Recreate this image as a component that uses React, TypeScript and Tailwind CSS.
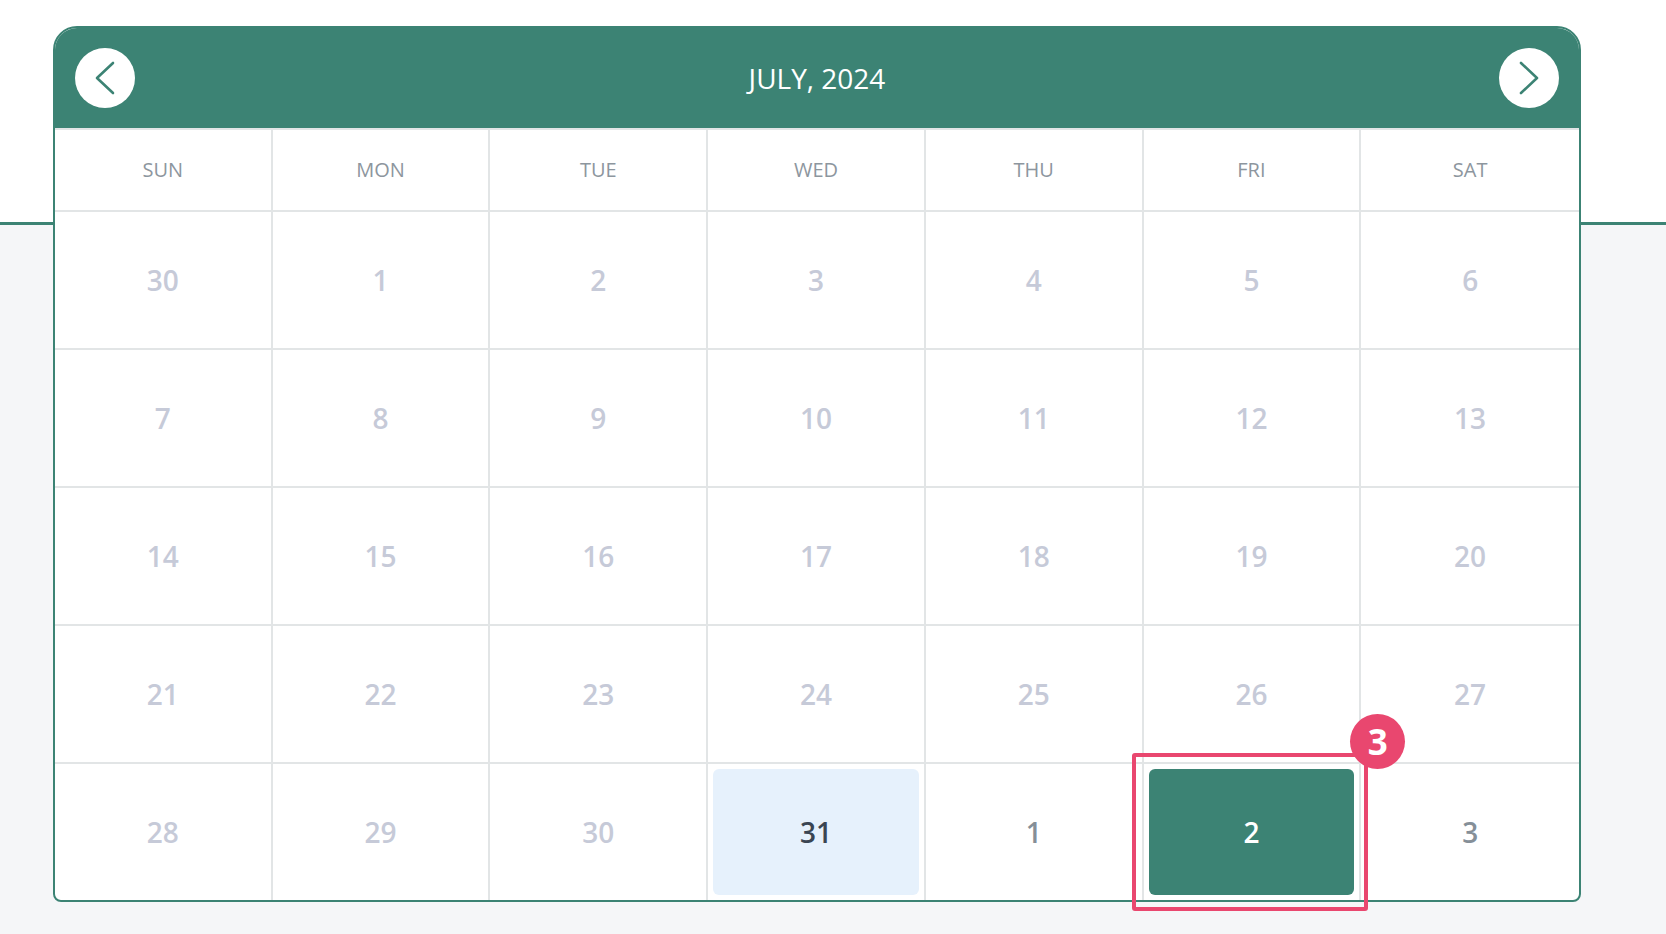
import React from "react";

const GREEN = "#3c8374";

type Day = { n: number; kind: "muted" | "next" | "today" | "selected" };

const weeks: Day[][] = [
  [30, 1, 2, 3, 4, 5, 6].map((n) => ({ n, kind: "muted" as const })),
  [7, 8, 9, 10, 11, 12, 13].map((n) => ({ n, kind: "muted" as const })),
  [14, 15, 16, 17, 18, 19, 20].map((n) => ({ n, kind: "muted" as const })),
  [21, 22, 23, 24, 25, 26, 27].map((n) => ({ n, kind: "muted" as const })),
  [
    { n: 28, kind: "muted" },
    { n: 29, kind: "muted" },
    { n: 30, kind: "muted" },
    { n: 31, kind: "today" },
    { n: 1, kind: "next" },
    { n: 2, kind: "selected" },
    { n: 3, kind: "next" },
  ],
];

const days = ["SUN", "MON", "TUE", "WED", "THU", "FRI", "SAT"];

function Chevron({ dir }: { dir: "left" | "right" }) {
  const pts = dir === "left" ? "38,15 22,30 38,45" : "22,15 38,30 22,45";
  return (
    <svg width="60" height="60" viewBox="0 0 60 60" fill="none">
      <polyline points={pts} stroke={GREEN} strokeWidth="2.6" strokeLinecap="round" strokeLinejoin="round" />
    </svg>
  );
}

function Cell({ d, last }: { d: Day; last: boolean }) {
  const border = last ? "" : "border-r-2 border-[#e2e5e6]";
  if (d.kind === "today") {
    return (
      <div className={`h-full p-[5px] ${border}`}>
        <div className="w-full h-full rounded-[6px] bg-[#e6f1fc] flex items-center justify-center text-[28px] font-semibold text-[#3a4552]">
          {d.n}
        </div>
      </div>
    );
  }
  if (d.kind === "selected") {
    return (
      <div className={`relative h-full p-[5px] ${border}`}>
        <div className="w-full h-full rounded-[6px] bg-[#3c8374] flex items-center justify-center text-[28px] font-semibold text-white">
          {d.n}
        </div>
        <div className="absolute z-10 -left-[12px] -right-[9px] -top-[11px] -bottom-[11px] border-4 border-[#e9476f] rounded-[3px]" />
        <div className="absolute z-20 -right-[46px] -top-[50px] w-[55px] h-[55px] rounded-full bg-[#e9476f] flex items-center justify-center text-white text-[35px] font-bold leading-none">
          3
        </div>
      </div>
    );
  }
  return (
    <div
      className={`h-full flex items-center justify-center text-[28px] font-semibold ${border} ${
        d.kind === "next" ? "text-[#858f98]" : "text-[#c6cad8]"
      }`}
    >
      {d.n}
    </div>
  );
}

export default function App() {
  return (
    <div className="w-[1666px] h-[934px] pt-[26px] pl-[53px] font-['Open_Sans',sans-serif] bg-[linear-gradient(to_bottom,#ffffff_0px,#ffffff_222px,#3c8374_222px,#3c8374_225px,#f5f6f8_225px,#f5f6f8_100%)]">
      <div className="w-[1528px] border-2 border-[#3c8374] rounded-t-[24px] rounded-b-[8px] bg-white">
        <div className="h-[100px] bg-[#3c8374] rounded-t-[22px] flex items-center justify-between px-[20px]">
          <button className="w-[60px] h-[60px] rounded-full bg-white flex items-center justify-center">
            <Chevron dir="left" />
          </button>
          <div className="flex-1 text-center text-white text-[28px] leading-none">JULY, 2024</div>
          <button className="w-[60px] h-[60px] rounded-full bg-white flex items-center justify-center">
            <Chevron dir="right" />
          </button>
        </div>
        <div className="grid grid-cols-7 h-[84px] border-t-2 border-b-2 border-[#e2e5e6]">
          {days.map((d, i) => (
            <div
              key={d}
              className={`flex items-center justify-center text-[20px] text-[#8d969e] ${
                i < 6 ? "border-r-2 border-[#e2e5e6]" : ""
              }`}
            >
              {d}
            </div>
          ))}
        </div>
        {weeks.map((w, wi) => (
          <div
            key={wi}
            className={`grid grid-cols-7 ${wi < 4 ? "h-[138px] border-b-2 border-[#e2e5e6]" : "h-[136px]"}`}
          >
            {w.map((d, i) => (
              <Cell key={i} d={d} last={i === 6} />
            ))}
          </div>
        ))}
      </div>
    </div>
  );
}
